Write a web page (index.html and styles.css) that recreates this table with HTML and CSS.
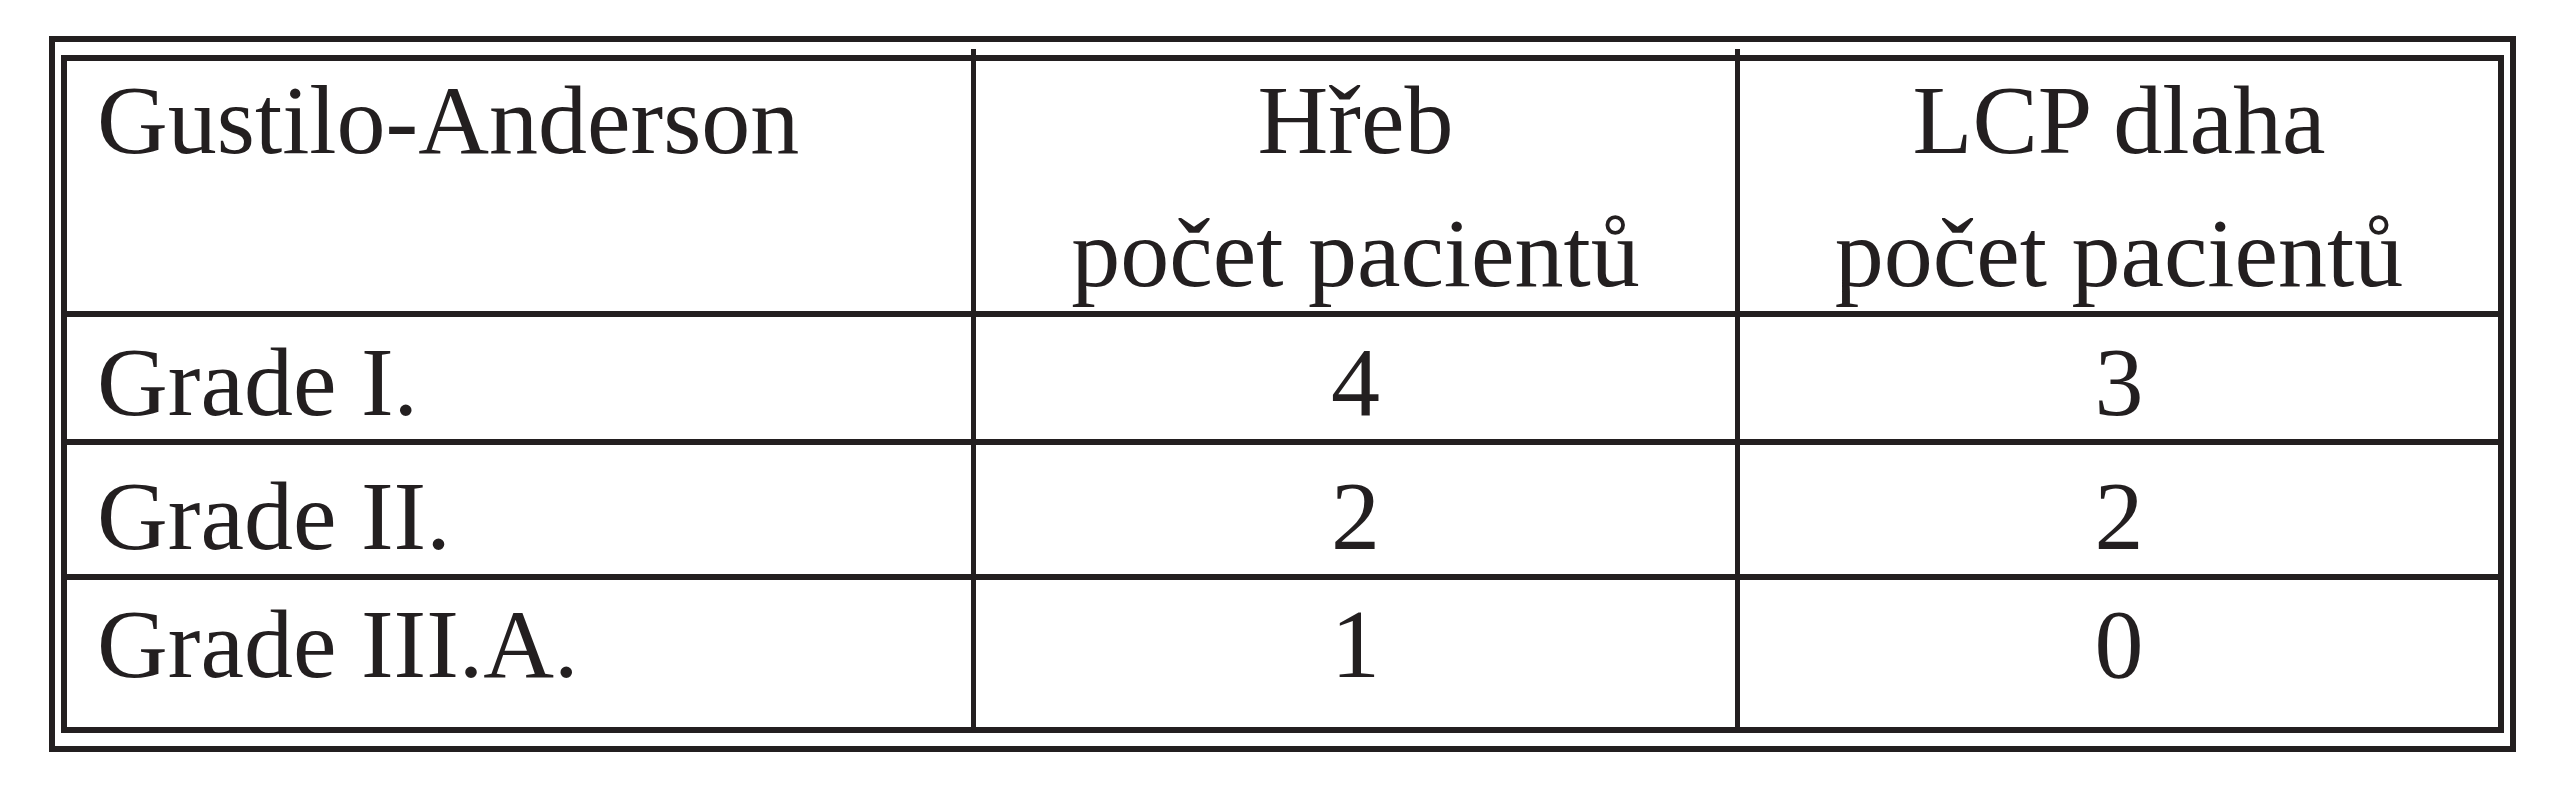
FILE: index.html
```html
<!DOCTYPE html>
<html lang="cs">
<head>
<meta charset="utf-8">
<title>Gustilo-Anderson</title>
<link rel="stylesheet" href="styles.css">
</head>
<body>
<div class="frame">
  <div class="grid">
    <div class="cell head first"><div class="line">Gustilo-Anderson</div></div>
    <div class="cell head mid tick"><div class="line">Hřeb</div><div class="line">počet pacientů</div></div>
    <div class="cell head mid tick"><div class="line">LCP dlaha</div><div class="line">počet pacientů</div></div>

    <div class="cell r1 first">Grade I.</div>
    <div class="cell r1 mid">4</div>
    <div class="cell r1 mid">3</div>

    <div class="cell r2 first">Grade II.</div>
    <div class="cell r2 mid">2</div>
    <div class="cell r2 mid">2</div>

    <div class="cell r3 first">Grade III.A.</div>
    <div class="cell r3 mid">1</div>
    <div class="cell r3 mid">0</div>
  </div>
</div>
</body>
</html>
```
FILE: styles.css
```css
html, body {
  margin: 0;
  padding: 0;
  background: #ffffff;
}

body {
  font-family: "Liberation Serif", "Times New Roman", serif;
  color: #231f20;
}

.frame {
  margin: 36px 0 0 49px;
  width: max-content;
  border: 6px solid #231f20;
  padding: 13px 6px;
}

.grid {
  display: grid;
  grid-template-columns: 904px 759px 758px;
  grid-template-rows: 250px 122px 129px 147px;
  column-gap: 5px;
  row-gap: 6px;
  border: 6px solid #231f20;
  background: #231f20;
}

.cell {
  background: #ffffff;
  font-size: 98px;
  line-height: 1;
  position: relative;
}

.first {
  padding-left: 30px;
}

.mid {
  text-align: center;
}

.head {
  padding-top: 10px;
  display: flex;
  flex-direction: column;
  gap: 35px;
}

.head.mid {
  align-items: center;
}

.r1 { padding-top: 16px; }
.r2 { padding-top: 22px; }
.r3 { padding-top: 15px; }

.tick::before {
  content: "";
  position: absolute;
  left: -5px;
  top: -12px;
  width: 5px;
  height: 12px;
  background: #231f20;
}
```
